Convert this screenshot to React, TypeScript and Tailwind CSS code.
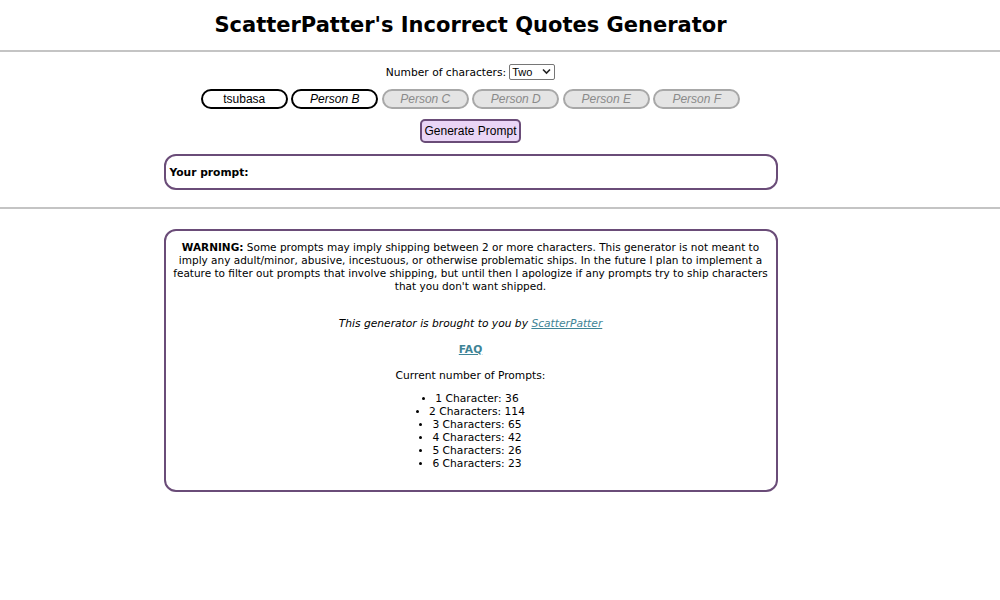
import React from "react";

const people = ["Person C", "Person D", "Person E", "Person F"];

const counts = [
  ["1 Character", 36],
  ["2 Characters", 114],
  ["3 Characters", 65],
  ["4 Characters", 42],
  ["5 Characters", 26],
  ["6 Characters", 23],
];

export default function App() {
  return (
    <div className="min-h-[600px] bg-white text-black text-[10.7px] leading-[13px] font-['Verdana','DejaVu_Sans',sans-serif]">
      <div className="w-[941px]">
        <h1 className="h-[50px] flex items-center justify-center text-[21px] font-bold pt-[1px]">
          ScatterPatter's Incorrect Quotes Generator
        </h1>
      </div>
      <hr className="border-0 border-t-2 border-[#c4c4c4]" />

      <div className="w-[941px] flex flex-col items-center">
        {/* 人数選択 */}
        <div className="mt-[12px] flex items-center gap-[3px] h-[16px]">
          <span>Number of characters:</span>
          <div className="relative inline-flex">
            <select
              defaultValue="Two"
              className="appearance-none h-[16px] w-[46px] border border-[#767676] rounded-[2px] bg-white pl-[2px] text-[11px] leading-[14px] font-['Liberation_Sans',Arial,sans-serif]"
            >
              <option>One</option>
              <option>Two</option>
              <option>Three</option>
              <option>Four</option>
              <option>Five</option>
              <option>Six</option>
            </select>
            <svg className="absolute right-[4px] top-[4px] pointer-events-none" width="9" height="7" viewBox="0 0 9 7">
              <path d="M1 1.5 L4.5 5 L8 1.5" fill="none" stroke="#222" strokeWidth="1.6" />
            </svg>
          </div>
        </div>

        {/* キャラクター名 */}
        <div className="mt-[9px] flex gap-[3.5px] font-['Liberation_Sans',Arial,sans-serif] text-[12px]">
          <input
            defaultValue="tsubasa"
            className="w-[87px] h-[20px] rounded-full border-2 border-black bg-white text-center outline-none"
          />
          <input
            placeholder="Person B"
            className="w-[87px] h-[20px] rounded-full border-2 border-black bg-white text-center italic outline-none placeholder:text-black"
          />
          {people.map((p) => (
            <input
              key={p}
              disabled
              placeholder={p}
              className="w-[87px] h-[20px] rounded-full border-2 border-[#a8a8a8] bg-[#e4e4e4] text-center italic outline-none placeholder:text-[#8a8a8a]"
            />
          ))}
        </div>

        <button className="mt-[10px] h-[24px] px-[2px] rounded-[5px] border-2 border-[#6a4c78] bg-[#ead5f6] text-[12px] font-['Liberation_Sans',Arial,sans-serif]">
          Generate Prompt
        </button>

        <div className="mt-[11px] w-[614px] h-[36px] rounded-[12px] border-2 border-[#6a4c78] flex items-center px-[4px]">
          <span className="font-bold">Your prompt:</span>
        </div>
      </div>

      <hr className="mt-[17px] border-0 border-t-2 border-[#c4c4c4]" />

      <div className="w-[941px] flex justify-center">
        <div className="mt-[20px] w-[614px] rounded-[12px] border-2 border-[#6a4c78] px-[3px] pt-[10px] pb-[20px] text-center">
          <p className="text-[10.5px]">
            <b>WARNING:</b> Some prompts may imply shipping between 2 or more characters. This generator is not meant to imply any adult/minor, abusive, incestuous, or otherwise problematic ships. In the future I plan to implement a feature to filter out prompts that involve shipping, but until then I apologize if any prompts try to ship characters that you don't want shipped.
          </p>
          <p className="mt-[24px] italic">
            This generator is brought to you by{" "}
            <a href="#" className="underline text-[#3f8496]">ScatterPatter</a>
          </p>
          <p className="mt-[13px]">
            <a href="#" className="font-bold underline text-[#3f8496]">FAQ</a>
          </p>
          <p className="mt-[13px]">Current number of Prompts:</p>
          <ul className="mt-[10px] flex flex-col items-center">
            {counts.map(([label, n]) => (
              <li key={label as string} className="flex items-center gap-[10px]">
                <span className="w-[3px] h-[3px] rounded-full bg-black" />
                <span>
                  {label}: {n}
                </span>
              </li>
            ))}
          </ul>
        </div>
      </div>
    </div>
  );
}
